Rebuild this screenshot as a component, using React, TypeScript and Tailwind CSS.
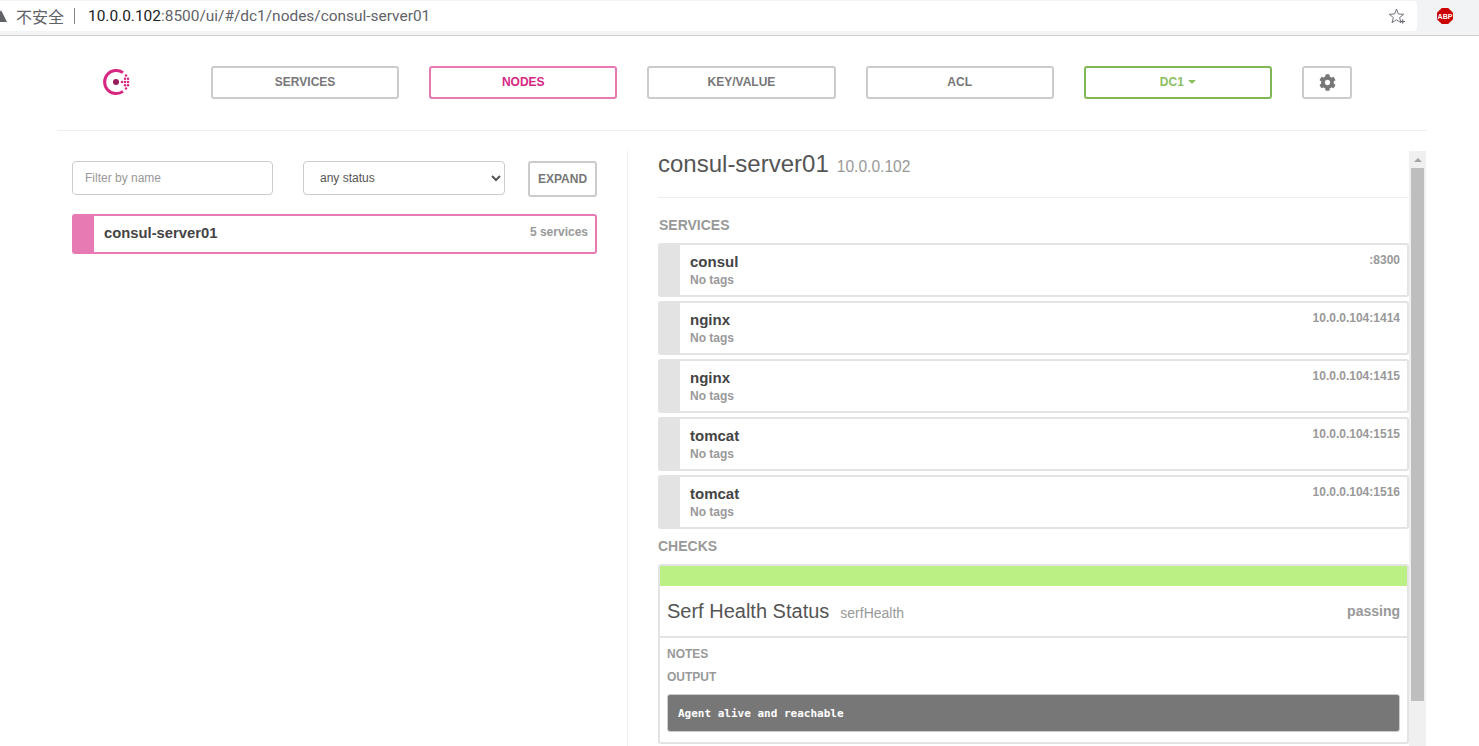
import React from "react";
import { FaCog } from "react-icons/fa";

const sans = "font-['Liberation_Sans',Arial,sans-serif]";

function NavButton({ label, tone = "gray" }: { label: string; tone?: "gray" | "pink" }) {
  return (
    <div
      className={`flex h-[33px] w-[188.2px] shrink-0 items-center justify-center rounded-[3px] border-2 bg-white pb-[2px] text-[12px] font-bold ${
        tone === "pink" ? "border-[#e87ab3] text-[#d62783]" : "border-[#cccccc] text-[#777777]"
      }`}
    >
      {label}
    </div>
  );
}

function Logo() {
  return (
    <svg width="30" height="30" viewBox="0 0 30 30" className="block">
      <path d="M22 5.6 A11.6 11.6 0 1 0 22 24.4" fill="none" stroke="#d62783" strokeWidth="3" />
      <circle cx="15" cy="15" r="3" fill="#961d59" />
      {[
        [21, 15],
        [24, 15],
        [27, 15],
        [24, 11.8],
        [27, 11.8],
        [24, 18.2],
        [27, 18.2],
        [25, 8.5],
        [25, 21.5],
      ].map(([x, y]) => (
        <circle key={`${x}-${y}`} cx={x} cy={y} r="1.25" fill="#d62783" />
      ))}
    </svg>
  );
}

function ServiceRow({ name, addr }: { name: string; addr: string }) {
  return (
    <div className="mb-1 flex h-[54px] rounded-[3px] border-2 border-[#e3e3e3] bg-white">
      <div className="w-5 shrink-0 bg-[#e3e3e3]" />
      <div className="flex-1 pl-[10px] pr-[7px]">
        <div className="flex justify-between">
          <span className="mt-[8px] text-[15px] font-bold leading-[18px] text-[#444444]">{name}</span>
          <span className="mt-[7px] text-[12px] font-bold leading-[16px] text-[#999999]">{addr}</span>
        </div>
        <div className="mt-[1px] text-[12px] font-bold leading-[16px] text-[#999999]">No tags</div>
      </div>
    </div>
  );
}

export default function App() {
  return (
    <div className={`flex h-[746px] w-[1479px] flex-col overflow-hidden bg-white ${sans}`}>
      <div className="flex h-[36px] shrink-0 items-start border-b border-[#cfcfcf] bg-[#f1f3f4]">
        <div className="mt-[1px] flex h-[30px] w-[1417px] items-center rounded-r-[4px] bg-white">
          <svg width="7" height="12" viewBox="0 0 7 12" className="mb-[1px] shrink-0">
            <path d="M-6 12 L1 0 L7 12 Z" fill="#5f6368" />
          </svg>
          <span className="ml-[9px] font-['Noto_Sans_CJK_SC',sans-serif] text-[16px] leading-[20px] text-[#5f6368]">
            不安全
          </span>
          <span className="ml-[10px] h-[16px] w-px bg-[#80868b]" />
          <span className="ml-[13px] font-['Roboto',sans-serif] text-[15.45px] leading-[20px] text-[#5f6368]">
            <span className="text-[#202124]">10.0.0.102</span>:8500/ui/#/dc1/nodes/consul-server01
          </span>
          <div className="ml-auto mr-[11px]">
            <svg width="18" height="18" viewBox="0 0 18 18" className="block">
              <path
                d="M8.5 2 L10.4 7 L15.7 7.3 L11.6 10.6 L13 15.7 L8.5 12.8 L4 15.7 L5.4 10.6 L1.3 7.3 L6.6 7 Z"
                fill="none"
                stroke="#6f7377"
                strokeWidth="1"
              />
              <path d="M12.5 14.5 H17 M14.75 12.3 V16.7" stroke="#5f6368" strokeWidth="1" />
            </svg>
          </div>
        </div>
        <div className="relative ml-[20px] mt-[8px] flex h-[16px] w-[16px] items-center justify-center bg-[#cc0000] [clip-path:polygon(30%_0,70%_0,100%_30%,100%_70%,70%_100%,30%_100%,0_70%,0_30%)]">
          <span className="text-[7px] font-bold leading-none text-white">ABP</span>
        </div>
      </div>

      <div className="ml-[57px] flex h-[95px] w-[1370px] shrink-0 items-start border-b border-[#eeeeee] pt-[30px]">
        <div className="ml-[44px] mt-[1px] w-[110px] shrink-0">
          <Logo />
        </div>
        <div className="flex gap-[30px]">
          <NavButton label="SERVICES" />
          <NavButton label="NODES" tone="pink" />
          <NavButton label="KEY/VALUE" />
          <NavButton label="ACL" />
          <div className="flex h-[33px] w-[188.2px] shrink-0 items-center justify-center gap-[4px] rounded-[3px] border-2 border-[#80b855] bg-white pb-[2px] text-[12px] font-bold text-[#8cc05f]">
            DC1
            <span className="mt-[1px] h-0 w-0 border-x-[4px] border-t-[4px] border-x-transparent border-t-[#8cc05f]" />
          </div>
          <div className="flex h-[33px] w-[50px] shrink-0 items-center justify-center rounded-[3px] border-2 border-[#cccccc] bg-white pl-px text-[#777777]">
            <FaCog size={17} />
          </div>
        </div>
      </div>

      <div className="ml-[57px] flex min-h-0 flex-1 w-[1370px] pt-[20px]">
        <div className="w-[570px] shrink-0 pl-[15px] pt-[10px]">
          <div className="flex items-start">
            <input
              placeholder="Filter by name"
              className="h-[34px] w-[201px] rounded-[4px] border border-[#cccccc] bg-white px-3 text-[12px] text-[#555555] outline-none placeholder:text-[#999999]"
            />
            <select className="ml-[30px] h-[34px] w-[202px] rounded-[4px] border border-[#cccccc] bg-white px-3 text-[12px] text-[#555555] outline-none">
              <option>any status</option>
            </select>
            <div className="ml-[23px] flex h-[36px] w-[69px] items-center justify-center rounded-[3px] border-2 border-[#cccccc] bg-white text-[12px] font-bold text-[#777777]">
              EXPAND
            </div>
          </div>
          <div className="mt-[17px] flex h-[40px] w-[525px] rounded-[3px] border-2 border-[#e87ab3] bg-white">
            <div className="w-5 shrink-0 bg-[#e87ab3]" />
            <div className="flex flex-1 justify-between pl-[10px] pr-[7px]">
              <span className="mt-[7px] text-[14.8px] font-bold leading-[20px] text-[#444444]">consul-server01</span>
              <span className="mt-[8px] text-[12px] font-bold leading-[16px] text-[#999999]">5 services</span>
            </div>
          </div>
        </div>

        <div className="flex min-h-0 flex-1 border-l border-[#eeeeee] pl-[30px]">
          <div className="min-h-0 w-[751px] shrink-0 overflow-hidden">
            <div className="h-[47px] border-b border-[#eeeeee]">
              <div className="flex items-baseline">
                <span className="text-[24px] leading-[26px] text-[#555555]">consul-server01</span>
                <span className="ml-[8px] text-[15.6px] leading-[26px] text-[#999999]">10.0.0.102</span>
              </div>
            </div>
            <div className="mb-[10px] mt-[19px] pl-px text-[14px] font-bold leading-[16px] text-[#999999]">SERVICES</div>
            <ServiceRow name="consul" addr=":8300" />
            <ServiceRow name="nginx" addr="10.0.0.104:1414" />
            <ServiceRow name="nginx" addr="10.0.0.104:1415" />
            <ServiceRow name="tomcat" addr="10.0.0.104:1515" />
            <ServiceRow name="tomcat" addr="10.0.0.104:1516" />
            <div className="mb-[10px] mt-[9px] text-[14px] font-bold leading-[16px] text-[#999999]">CHECKS</div>
            <div className="h-[180px] rounded-[3px] border-2 border-[#e3e3e3] bg-white">
              <div className="h-5 bg-[#bbf085]" />
              <div className="flex h-[52px] items-center justify-between border-b-2 border-[#e3e3e3] pl-[7px] pr-[7px] pt-px">
                <div className="flex items-baseline">
                  <span className="text-[20px] leading-[26px] text-[#555555]">Serf Health Status</span>
                  <span className="ml-[11px] text-[14px] leading-[26px] text-[#999999]">serfHealth</span>
                </div>
                <span className="text-[14px] font-bold text-[#999999]">passing</span>
              </div>
              <div className="px-[7px]">
                <div className="mt-[8px] text-[12px] font-bold leading-[16px] text-[#999999]">NOTES</div>
                <div className="mt-[7px] text-[12px] font-bold leading-[16px] text-[#999999]">OUTPUT</div>
                <div className="mt-[9px] flex h-[38px] items-center rounded-[3px] border border-[#cccccc] bg-[#777777] pl-[10px] pt-[2px] font-['DejaVu_Sans_Mono',monospace] text-[11px] font-bold text-white">
                  Agent alive and reachable
                </div>
              </div>
            </div>
          </div>
          <div className="flex h-full w-[17px] shrink-0 flex-col bg-[#f0f0f0]">
            <div className="flex h-[17px] shrink-0 items-center justify-center">
              <span className="h-0 w-0 border-x-[4px] border-b-[4px] border-x-transparent border-b-[#a3a3a3]" />
            </div>
            <div className="mx-[2px] h-[533px] bg-[#bebebe]" />
          </div>
        </div>
      </div>
    </div>
  );
}
